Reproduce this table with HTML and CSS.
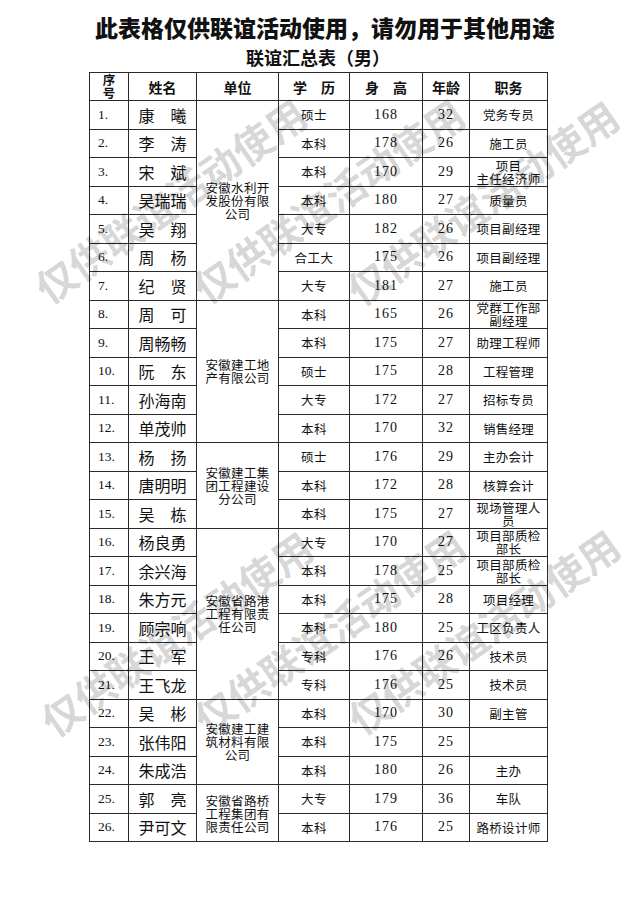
FILE: index.html
```html
<!DOCTYPE html>
<html lang="zh-CN">
<head>
<meta charset="utf-8">
<title>联谊汇总表（男）</title>
<link rel="stylesheet" href="styles.css">
</head>
<body>
<div class="page">
  <h1 class="title">此表格仅供联谊活动使用，请勿用于其他用途</h1>
  <h2 class="subtitle">联谊汇总表（男）</h2>
  <table class="sheet">
    <colgroup>
      <col class="c-no"><col class="c-name"><col class="c-unit"><col class="c-edu"><col class="c-h"><col class="c-age"><col class="c-job">
    </colgroup>
    <thead>
      <tr class="head">
        <th class="th-no"><span class="stack">序<br>号</span></th>
        <th>姓名</th>
        <th>单位</th>
        <th>学　历</th>
        <th>身　高</th>
        <th>年龄</th>
        <th>职务</th>
      </tr>
    </thead>
    <tbody>
      <tr><td class="no">1.</td><td class="name">康　曦</td><td class="unit" rowspan="7">安徽水利开<br>发股份有限<br>公司</td><td class="edu">硕士</td><td class="num">168</td><td class="num">32</td><td class="job">党务专员</td></tr>
      <tr><td class="no">2.</td><td class="name">李　涛</td><td class="edu">本科</td><td class="num">178</td><td class="num">26</td><td class="job">施工员</td></tr>
      <tr><td class="no">3.</td><td class="name">宋　斌</td><td class="edu">本科</td><td class="num">170</td><td class="num">29</td><td class="job">项目<br>主任经济师</td></tr>
      <tr><td class="no">4.</td><td class="name">吴瑞瑞</td><td class="edu">本科</td><td class="num">180</td><td class="num">27</td><td class="job">质量员</td></tr>
      <tr><td class="no">5.</td><td class="name">吴　翔</td><td class="edu">大专</td><td class="num">182</td><td class="num">26</td><td class="job">项目副经理</td></tr>
      <tr><td class="no">6.</td><td class="name">周　杨</td><td class="edu">合工大</td><td class="num">175</td><td class="num">26</td><td class="job">项目副经理</td></tr>
      <tr><td class="no">7.</td><td class="name">纪　贤</td><td class="edu">大专</td><td class="num">181</td><td class="num">27</td><td class="job">施工员</td></tr>
      <tr><td class="no">8.</td><td class="name">周　可</td><td class="unit" rowspan="5">安徽建工地<br>产有限公司</td><td class="edu">本科</td><td class="num">165</td><td class="num">26</td><td class="job">党群工作部<br>副经理</td></tr>
      <tr><td class="no">9.</td><td class="name">周畅畅</td><td class="edu">本科</td><td class="num">175</td><td class="num">27</td><td class="job">助理工程师</td></tr>
      <tr><td class="no">10.</td><td class="name">阮　东</td><td class="edu">硕士</td><td class="num">175</td><td class="num">28</td><td class="job">工程管理</td></tr>
      <tr><td class="no">11.</td><td class="name">孙海南</td><td class="edu">大专</td><td class="num">172</td><td class="num">27</td><td class="job">招标专员</td></tr>
      <tr><td class="no">12.</td><td class="name">单茂帅</td><td class="edu">本科</td><td class="num">170</td><td class="num">32</td><td class="job">销售经理</td></tr>
      <tr><td class="no">13.</td><td class="name">杨　扬</td><td class="unit" rowspan="3">安徽建工集<br>团工程建设<br>分公司</td><td class="edu">硕士</td><td class="num">176</td><td class="num">29</td><td class="job">主办会计</td></tr>
      <tr><td class="no">14.</td><td class="name">唐明明</td><td class="edu">本科</td><td class="num">172</td><td class="num">28</td><td class="job">核算会计</td></tr>
      <tr><td class="no">15.</td><td class="name">吴　栋</td><td class="edu">本科</td><td class="num">175</td><td class="num">27</td><td class="job">现场管理人<br>员</td></tr>
      <tr><td class="no">16.</td><td class="name">杨良勇</td><td class="unit" rowspan="6">安徽省路港<br>工程有限责<br>任公司</td><td class="edu">大专</td><td class="num">170</td><td class="num">27</td><td class="job">项目部质检<br>部长</td></tr>
      <tr><td class="no">17.</td><td class="name">余兴海</td><td class="edu">本科</td><td class="num">178</td><td class="num">25</td><td class="job">项目部质检<br>部长</td></tr>
      <tr><td class="no">18.</td><td class="name">朱方元</td><td class="edu">本科</td><td class="num">175</td><td class="num">28</td><td class="job">项目经理</td></tr>
      <tr><td class="no">19.</td><td class="name">顾宗响</td><td class="edu">本科</td><td class="num">180</td><td class="num">25</td><td class="job">工区负责人</td></tr>
      <tr><td class="no">20.</td><td class="name">王　军</td><td class="edu">专科</td><td class="num">176</td><td class="num">26</td><td class="job">技术员</td></tr>
      <tr><td class="no">21.</td><td class="name">王飞龙</td><td class="edu">专科</td><td class="num">176</td><td class="num">25</td><td class="job">技术员</td></tr>
      <tr><td class="no">22.</td><td class="name">吴　彬</td><td class="unit" rowspan="3">安徽建工建<br>筑材料有限<br>公司</td><td class="edu">本科</td><td class="num">170</td><td class="num">30</td><td class="job">副主管</td></tr>
      <tr><td class="no">23.</td><td class="name">张伟阳</td><td class="edu">本科</td><td class="num">175</td><td class="num">25</td><td class="job"></td></tr>
      <tr><td class="no">24.</td><td class="name">朱成浩</td><td class="edu">本科</td><td class="num">180</td><td class="num">26</td><td class="job">主办</td></tr>
      <tr><td class="no">25.</td><td class="name">郭　亮</td><td class="unit" rowspan="2">安徽省路桥<br>工程集团有<br>限责任公司</td><td class="edu">大专</td><td class="num">179</td><td class="num">36</td><td class="job">车队</td></tr>
      <tr><td class="no">26.</td><td class="name">尹可文</td><td class="edu">本科</td><td class="num">176</td><td class="num">25</td><td class="job">路桥设计师</td></tr>
    </tbody>
  </table>

  <div class="wm wm-a">仅供联谊活动使用</div>
  <div class="wm wm-b">仅供联谊活动使用</div>
  <div class="wm wm-c">仅供联谊活动使用</div>
  <div class="wm wm-d">仅供联谊活动使用</div>
  <div class="wm wm-e">仅供联谊活动使用</div>
  <div class="wm wm-f">仅供联谊活动使用</div>
</div>
</body>
</html>
```

FILE: styles.css
```css
html, body {
  margin: 0;
  padding: 0;
  background: #fff;
}

.page {
  position: relative;
  width: 636px;
  height: 900px;
  overflow: hidden;
  font-family: "Noto Sans CJK SC", "Liberation Serif", sans-serif;
  color: #111;
}

.title {
  margin: 0;
  padding: 13px 0 0 14px;
  height: 28px;
  line-height: 28px;
  font-size: 23px;
  font-weight: 900;
  text-align: center;
  white-space: nowrap;
}

.subtitle {
  margin: 4px 0 3px 0;
  height: 24px;
  line-height: 24px;
  font-size: 18px;
  font-weight: 700;
  text-align: center;
}

.sheet {
  margin-left: 89px;
  width: 458px;
  table-layout: fixed;
  border-collapse: collapse;
}

.c-no { width: 39px; }
.c-name { width: 68px; }
.c-unit { width: 82px; }
.c-edu { width: 71px; }
.c-h { width: 73px; }
.c-age { width: 47px; }
.c-job { width: 78px; }

.sheet th,
.sheet td {
  border: 1px solid #2a2a2a;
  padding: 0;
  text-align: center;
  vertical-align: middle;
}

.head { height: 28px; }

.sheet th {
  font-size: 14px;
  font-weight: 700;
  line-height: 16px;
  white-space: nowrap;
}

.stack {
  display: inline-block;
  font-size: 12.5px;
  line-height: 13px;
}

.sheet tbody tr { height: 28.5px; }

.no {
  font-family: "Liberation Serif", serif;
  font-size: 13.5px;
  text-align: left !important;
  padding-left: 8px !important;
}

.name {
  font-size: 16px;
  line-height: 18px;
  white-space: nowrap;
}

.unit {
  font-size: 12.5px;
  line-height: 13px;
  letter-spacing: 0.3px;
}

.edu {
  font-size: 12.5px;
  letter-spacing: 0.5px;
}

.num {
  font-family: "Liberation Serif", serif;
  font-size: 14px;
  letter-spacing: 1px;
}

.job {
  font-size: 12.5px;
  line-height: 13px;
  letter-spacing: 0.3px;
  white-space: nowrap;
}

.wm {
  position: absolute;
  width: 340px;
  height: 42px;
  line-height: 42px;
  font-size: 40px;
  font-weight: 700;
  text-align: center;
  white-space: nowrap;
  color: rgba(0, 0, 0, 0.17);
  transform: rotate(-35deg);
  pointer-events: none;
  font-family: "Noto Sans CJK SC", sans-serif;
}

.wm-a { left: 0px;   top: 179px; }
.wm-b { left: 158px; top: 179px; }
.wm-c { left: 312px; top: 181px; }
.wm-d { left: 6px;   top: 612px; }
.wm-e { left: 159px; top: 610px; }
.wm-f { left: 313px; top: 610px; }
```
